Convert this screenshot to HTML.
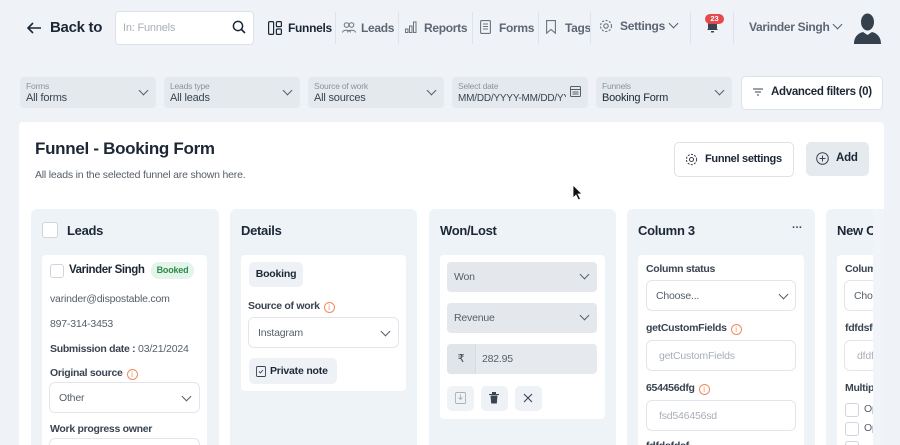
<!DOCTYPE html>
<html><head><meta charset="utf-8"><style>
*{box-sizing:border-box;margin:0;padding:0}
html,body{width:900px;height:445px;overflow:hidden}
body{background:#eff3f8;font-family:"Liberation Sans",sans-serif;color:#1c2735;position:relative;letter-spacing:-0.2px;white-space:nowrap}
.a{position:absolute}
.nav{font-size:12px;font-weight:bold;color:#5d6673;top:21px;letter-spacing:-0.3px}
.div{position:absolute;width:1px;background:#dde3ea;top:12px;height:32px}
.flt{position:absolute;top:77px;height:31px;width:136px;background:#e4e9ee;border-radius:4px}
.flt .l{position:absolute;left:6px;top:4px;font-size:8.5px;color:#8a929c}
.flt .v{position:absolute;left:6px;top:15px;font-size:11px;color:#3a4450}
.chev{position:absolute;width:7px;height:7px;border-right:1.5px solid #555e69;border-bottom:1.5px solid #555e69;transform:rotate(45deg)}
.col{position:absolute;top:209px;height:236px;background:#eef3f8;border-radius:6px 6px 0 0}
.ct{position:absolute;top:223px;font-size:13px;font-weight:bold;color:#1c2735;letter-spacing:-0.3px}
.card{position:absolute;background:#fff;border-radius:4px}
.t{position:absolute;font-size:10.5px;color:#555e69}
.b{font-weight:bold;color:#3a4450;letter-spacing:-0.3px}
.sel{position:absolute;height:31px;border:1px solid #e2e6eb;border-radius:6px;background:#fff;font-size:10.5px;color:#555e69;padding:9px 0 0 9px}
.gsel{position:absolute;height:30px;border-radius:4px;background:#e4e8ec;font-size:10.5px;color:#555e69;padding:9px 0 0 7px}
.info{display:inline-block;width:11px;height:11px;border:1px solid #f08a5d;border-radius:50%;font-size:8px;color:#f08a5d;text-align:center;line-height:9px;vertical-align:-1px;margin-left:4px;font-weight:normal;letter-spacing:0}
.cb{position:absolute;width:14px;height:14px;border:1px solid #cfd5dc;border-radius:3px;background:#fff}
</style></head><body>
<!-- header -->
<svg class="a" style="left:26px;top:21px" width="16" height="14" viewBox="0 0 16 14"><path d="M15 7H2M7 2L2 7l5 5" stroke="#1c2735" stroke-width="1.6" fill="none"/></svg>
<div class="a" style="left:50px;top:19px;font-size:15px;font-weight:bold;letter-spacing:-0.3px">Back to</div>
<div class="a" style="left:115px;top:11px;width:139px;height:34px;background:#fff;border:1px solid #dde2e8;border-radius:4px"></div>
<div class="a" style="left:123px;top:22px;font-size:11px;color:#a9afb7">In: Funnels</div>
<svg class="a" style="left:232px;top:20px" width="14" height="14" viewBox="0 0 14 14"><circle cx="6" cy="6" r="4.6" stroke="#1c2735" stroke-width="1.5" fill="none"/><path d="M9.5 9.5L13 13" stroke="#1c2735" stroke-width="1.6"/></svg>
<svg class="a" style="left:268px;top:21px" width="14" height="14" viewBox="0 0 14 14" fill="none" stroke="#1c2735" stroke-width="1.2"><rect x="0.6" y="0.6" width="5" height="12.8" rx="1"/><rect x="8.4" y="0.6" width="5" height="5" rx="1"/><rect x="8.4" y="8" width="5" height="5.4" rx="1"/></svg>
<div class="a nav" style="left:288px;color:#1c2735">Funnels</div>
<div class="div" style="left:335px"></div>
<svg class="a" style="left:342px;top:22px" width="14" height="11" viewBox="0 0 14 11" fill="none" stroke="#6b737d" stroke-width="1"><circle cx="4.5" cy="3" r="2.3"/><circle cx="9.5" cy="3" r="2.3"/><path d="M0.5 10.5c0-3 8-3 8 0M5.5 10.5c0-3 8-3 8 0"/></svg>
<div class="a nav" style="left:361px">Leads</div>
<div class="div" style="left:398px"></div>
<svg class="a" style="left:405px;top:21px" width="12" height="12" viewBox="0 0 12 12" fill="none" stroke="#6b737d" stroke-width="1"><rect x="0.5" y="8" width="2.5" height="3.5"/><rect x="4.5" y="5" width="2.5" height="6.5"/><rect x="8.5" y="1" width="2.5" height="10.5"/></svg>
<div class="a nav" style="left:424px">Reports</div>
<div class="div" style="left:472px"></div>
<svg class="a" style="left:480px;top:20px" width="11" height="14" viewBox="0 0 11 14" fill="none" stroke="#6b737d" stroke-width="1.1"><rect x="0.6" y="0.6" width="9.8" height="12.8" rx="1"/><path d="M3 4h5M3 6.5h5M3 9h5"/></svg>
<div class="a nav" style="left:499px">Forms</div>
<div class="div" style="left:538px"></div>
<svg class="a" style="left:546px;top:20px" width="10" height="14" viewBox="0 0 10 14" fill="none" stroke="#6b737d" stroke-width="1.1"><path d="M0.6 0.6h8.8v12.6L5 9.5 0.6 13.2z"/></svg>
<div class="a nav" style="left:565px">Tags</div>
<div class="div" style="left:590px"></div>
<svg class="a" style="left:599px;top:19px" width="14" height="14" viewBox="0 0 14 14" fill="none" stroke="#6b737d" stroke-width="1.1"><circle cx="7" cy="7" r="2.2"/><circle cx="7" cy="7" r="5.5" stroke-dasharray="2.2 1.4"/></svg>
<div class="a nav" style="left:620px;top:19px">Settings</div>
<div class="chev" style="left:670px;top:20px"></div>
<div class="div" style="left:690px"></div>
<svg class="a" style="left:706px;top:17px" width="13" height="16" viewBox="0 0 13 16"><path d="M2 12V7a4.5 4.5 0 019 0v5l1 1H1z M5 14h3v1.5H5z" fill="#3a4450"/></svg>
<div class="a" style="left:705px;top:14px;width:19px;height:10px;background:#e5484d;border-radius:5px;color:#fff;font-size:7.5px;text-align:center;line-height:10px;font-weight:bold;letter-spacing:0">23</div>
<div class="div" style="left:733px"></div>
<div class="a nav" style="left:749px;top:20px">Varinder Singh</div>
<div class="chev" style="left:834px;top:21px"></div>
<svg class="a" style="left:853px;top:12px" width="29" height="32" viewBox="0 0 29 32"><ellipse cx="14.5" cy="10" rx="6.5" ry="8.5" fill="#34414d"/><path d="M1 32c0-8 5-11 9-12l4.5 3 4.5-3c4 1 9 4 9 12z" fill="#34414d"/></svg>
<!-- filters -->
<div class="flt" style="left:20px"><div class="l">Forms</div><div class="v">All forms</div><div class="chev" style="left:120px;top:10px"></div></div>
<div class="flt" style="left:164px"><div class="l">Leads type</div><div class="v">All leads</div><div class="chev" style="left:120px;top:10px"></div></div>
<div class="flt" style="left:308px"><div class="l">Source of work</div><div class="v">All sources</div><div class="chev" style="left:120px;top:10px"></div></div>
<div class="flt" style="left:452px;overflow:hidden"><div class="l">Select date</div><div class="v" style="font-size:10px;top:16px;width:108px;overflow:hidden;white-space:nowrap">MM/DD/YYYY-MM/DD/YYYY</div>
<svg class="a" style="left:118px;top:9px" width="11" height="11" viewBox="0 0 11 11" fill="none" stroke="#555e69"><rect x="0.5" y="0.5" width="10" height="10" rx="1"/><path d="M0.5 3.5h10M2.5 6h6M2.5 8h6"/></svg></div>
<div class="flt" style="left:596px"><div class="l">Funnels</div><div class="v" style="color:#1c2735">Booking Form</div><div class="chev" style="left:120px;top:10px"></div></div>
<div class="a" style="left:741px;top:76px;width:142px;height:34px;background:#fff;border:1px solid #dde2e8;border-radius:5px"></div>
<svg class="a" style="left:753px;top:88px" width="10" height="8" viewBox="0 0 10 8" stroke="#3a4450" stroke-width="1"><path d="M0 1h10M2 4h6M4 7h2"/></svg>
<div class="a" style="left:771px;top:86px;font-size:11.5px;font-weight:bold;letter-spacing:-0.3px">Advanced filters (0)</div>
<!-- main -->
<div class="a" style="left:19px;top:122px;width:865px;height:323px;background:#fff;border-radius:4px 4px 0 0"></div>
<div class="a" style="left:35px;top:139px;font-size:17px;font-weight:bold;letter-spacing:-0.3px">Funnel - Booking Form</div>
<div class="a" style="left:35px;top:169px;font-size:10.5px;color:#555e69">All leads in the selected funnel are shown here.</div>
<div class="a" style="left:674px;top:142px;width:120px;height:35px;border:1px solid #dde2e8;border-radius:5px;background:#fff"></div>
<svg class="a" style="left:685px;top:153px" width="13" height="13" viewBox="0 0 14 14" fill="none" stroke="#3a4450" stroke-width="1.1"><circle cx="7" cy="7" r="2.2"/><circle cx="7" cy="7" r="5.5" stroke-dasharray="2.2 1.4"/></svg>
<div class="a" style="left:705px;top:153px;font-size:11px;font-weight:bold;letter-spacing:-0.3px">Funnel settings</div>
<div class="a" style="left:806px;top:142px;width:63px;height:34px;background:#e5eaee;border-radius:5px"></div>
<svg class="a" style="left:816px;top:152px" width="13" height="13" viewBox="0 0 13 13" fill="none" stroke="#3a4450" stroke-width="1"><circle cx="6.5" cy="6.5" r="5.8"/><path d="M6.5 3.5v6M3.5 6.5h6"/></svg>
<div class="a" style="left:836px;top:152px;font-size:11.5px;font-weight:bold">Add</div>
<!-- cursor -->
<svg class="a" style="left:572px;top:184px" width="11" height="17" viewBox="0 0 11 17"><path d="M1 1v13l3-3 2.5 5 2-1-2.5-5h4z" fill="#111" stroke="#fff" stroke-width="0.8"/></svg>
<!-- columns -->
<div class="a" style="left:0;top:0;width:873px;height:445px;overflow:hidden">
<div class="col" style="left:31px;width:188px"></div>
<div class="col" style="left:230px;width:187px"></div>
<div class="col" style="left:429px;width:187px"></div>
<div class="col" style="left:627px;width:188px"></div>
<div class="col" style="left:826px;width:188px"></div>
<div class="cb" style="left:42px;top:222px;width:16px;height:16px"></div>
<div class="ct" style="left:67px">Leads</div>
<div class="ct" style="left:241px">Details</div>
<div class="ct" style="left:440px">Won/Lost</div>
<div class="ct" style="left:638px">Column 3</div>
<div class="a" style="left:792px;top:222px;font-size:11px;font-weight:bold;color:#3a4450">···</div>
<div class="ct" style="left:837px">New Column</div>
<!-- card 1 -->
<div class="card" style="left:42px;top:255px;width:165px;height:190px;border-radius:4px 4px 0 0"></div>
<div class="cb" style="left:50px;top:264px"></div>
<div class="a" style="left:69px;top:264px;font-size:11.5px;font-weight:bold;letter-spacing:-0.4px">Varinder Singh</div>
<div class="a" style="left:151px;top:262px;width:43px;height:17px;background:#e3f4ea;border-radius:8px;color:#2f8a4a;font-size:9px;font-weight:bold;text-align:center;line-height:17px">Booked</div>
<div class="t" style="left:50px;top:293px">varinder@dispostable.com</div>
<div class="t" style="left:50px;top:318px">897-314-3453</div>
<div class="t" style="left:50px;top:343px"><span class="b">Submission date :</span> 03/21/2024</div>
<div class="t b" style="left:50px;top:367px">Original source<span class="info">i</span></div>
<div class="sel" style="left:49px;top:382px;width:151px">Other<div class="chev" style="left:133px;top:10px"></div></div>
<div class="t b" style="left:50px;top:423px">Work progress owner</div>
<div class="a" style="left:49px;top:438px;width:151px;height:7px;border:1px solid #e2e6eb;border-bottom:none;border-radius:6px 6px 0 0"></div>
<!-- card 2 -->
<div class="card" style="left:241px;top:255px;width:165px;height:136px"></div>
<div class="a" style="left:249px;top:262px;width:54px;height:25px;background:#eef2f6;border-radius:5px;font-size:10.5px;font-weight:bold;text-align:center;line-height:25px">Booking</div>
<div class="t b" style="left:248px;top:300px">Source of work<span class="info">i</span></div>
<div class="sel" style="left:248px;top:317px;width:151px">Instagram<div class="chev" style="left:133px;top:10px"></div></div>
<div class="a" style="left:249px;top:358px;width:88px;height:26px;background:#eef2f6;border-radius:5px"></div>
<svg class="a" style="left:256px;top:366px" width="10" height="11" viewBox="0 0 10 11" fill="none" stroke="#3a4450" stroke-width="0.9"><rect x="0.5" y="0.5" width="9" height="10" rx="1"/><path d="M3 5.5l1.5 1.5 2.5-3"/></svg>
<div class="a" style="left:270px;top:365px;font-size:10.5px;font-weight:bold">Private note</div>
<!-- card 3 -->
<div class="card" style="left:440px;top:255px;width:165px;height:164px"></div>
<div class="gsel" style="left:447px;top:262px;width:150px">Won<div class="chev" style="left:134px;top:9px"></div></div>
<div class="gsel" style="left:447px;top:303px;width:150px">Revenue<div class="chev" style="left:134px;top:9px"></div></div>
<div class="gsel" style="left:447px;top:344px;width:150px;padding-left:35px;background:#e6eaee">282.95</div>
<div class="a" style="left:447px;top:344px;width:29px;height:30px;background:#e0e5ea;border-radius:4px 0 0 4px;border-right:1px solid #d5dbe1;font-size:11px;text-align:center;line-height:30px;color:#3a4450">₹</div>
<div class="a" style="left:447px;top:386px;width:27px;height:25px;background:#f0f3f6;border-radius:5px"></div>
<svg class="a" style="left:455px;top:392px" width="11" height="12" viewBox="0 0 11 12" fill="none" stroke="#aab1b9" stroke-width="0.9"><rect x="0.5" y="0.5" width="10" height="11" rx="1"/><path d="M5.5 2.5v5M3.5 5.5l2 2 2-2"/></svg>
<div class="a" style="left:481px;top:386px;width:27px;height:25px;background:#eef2f6;border-radius:5px"></div>
<svg class="a" style="left:489px;top:392px" width="10" height="12" viewBox="0 0 10 12"><path d="M0 2h10v1H0zM3 0h4v2H3zM1.5 3.5h7l-.7 8H2.2z" fill="#3a4450"/></svg>
<div class="a" style="left:515px;top:386px;width:27px;height:25px;background:#eef2f6;border-radius:5px"></div>
<svg class="a" style="left:523px;top:393px" width="10" height="10" viewBox="0 0 10 10" stroke="#3a4450" stroke-width="1.1"><path d="M1 1l8 8M9 1l-8 8"/></svg>
<!-- card 4 -->
<div class="card" style="left:638px;top:255px;width:166px;height:190px;border-radius:4px 4px 0 0"></div>
<div class="t b" style="left:646px;top:263px">Column status</div>
<div class="sel" style="left:646px;top:280px;width:150px">Choose...<div class="chev" style="left:133px;top:10px"></div></div>
<div class="t b" style="left:646px;top:322px">getCustomFields<span class="info">i</span></div>
<div class="sel" style="left:646px;top:340px;width:150px;color:#a9afb7;padding-left:12px">getCustomFields</div>
<div class="t b" style="left:646px;top:382px">654456dfg<span class="info">i</span></div>
<div class="sel" style="left:646px;top:400px;width:150px;color:#a9afb7;padding-left:12px">fsd546456sd</div>
<div class="a" style="left:646px;top:440px;height:5px;width:100px;overflow:hidden;font-size:10.5px;font-weight:bold;color:#3a4450">fdfdsfdsf</div>
<!-- card 5 -->
<div class="card" style="left:837px;top:255px;width:36px;height:190px;border-radius:4px 0 0 0"></div>
<div class="t b" style="left:845px;top:263px">Column status</div>
<div class="sel" style="left:844px;top:280px;width:150px">Choose...</div>
<div class="t b" style="left:845px;top:322px">fdfdsfdsf</div>
<div class="sel" style="left:844px;top:340px;width:150px;color:#a9afb7;padding-left:12px">dfdfd</div>
<div class="t b" style="left:845px;top:382px">Multiple</div>
<div class="cb" style="left:845px;top:403px"></div><div class="t" style="left:864px;top:403px">Option</div>
<div class="cb" style="left:845px;top:422px"></div><div class="t" style="left:864px;top:422px">Option</div>
<div class="a" style="left:845px;top:441px;width:14px;height:4px;border:1px solid #cfd5dc;border-bottom:none;border-radius:3px 3px 0 0"></div>
</div>
<div class="a" style="left:873px;top:209px;width:11px;height:236px;background:#f1f4f8"></div>
</body></html>
